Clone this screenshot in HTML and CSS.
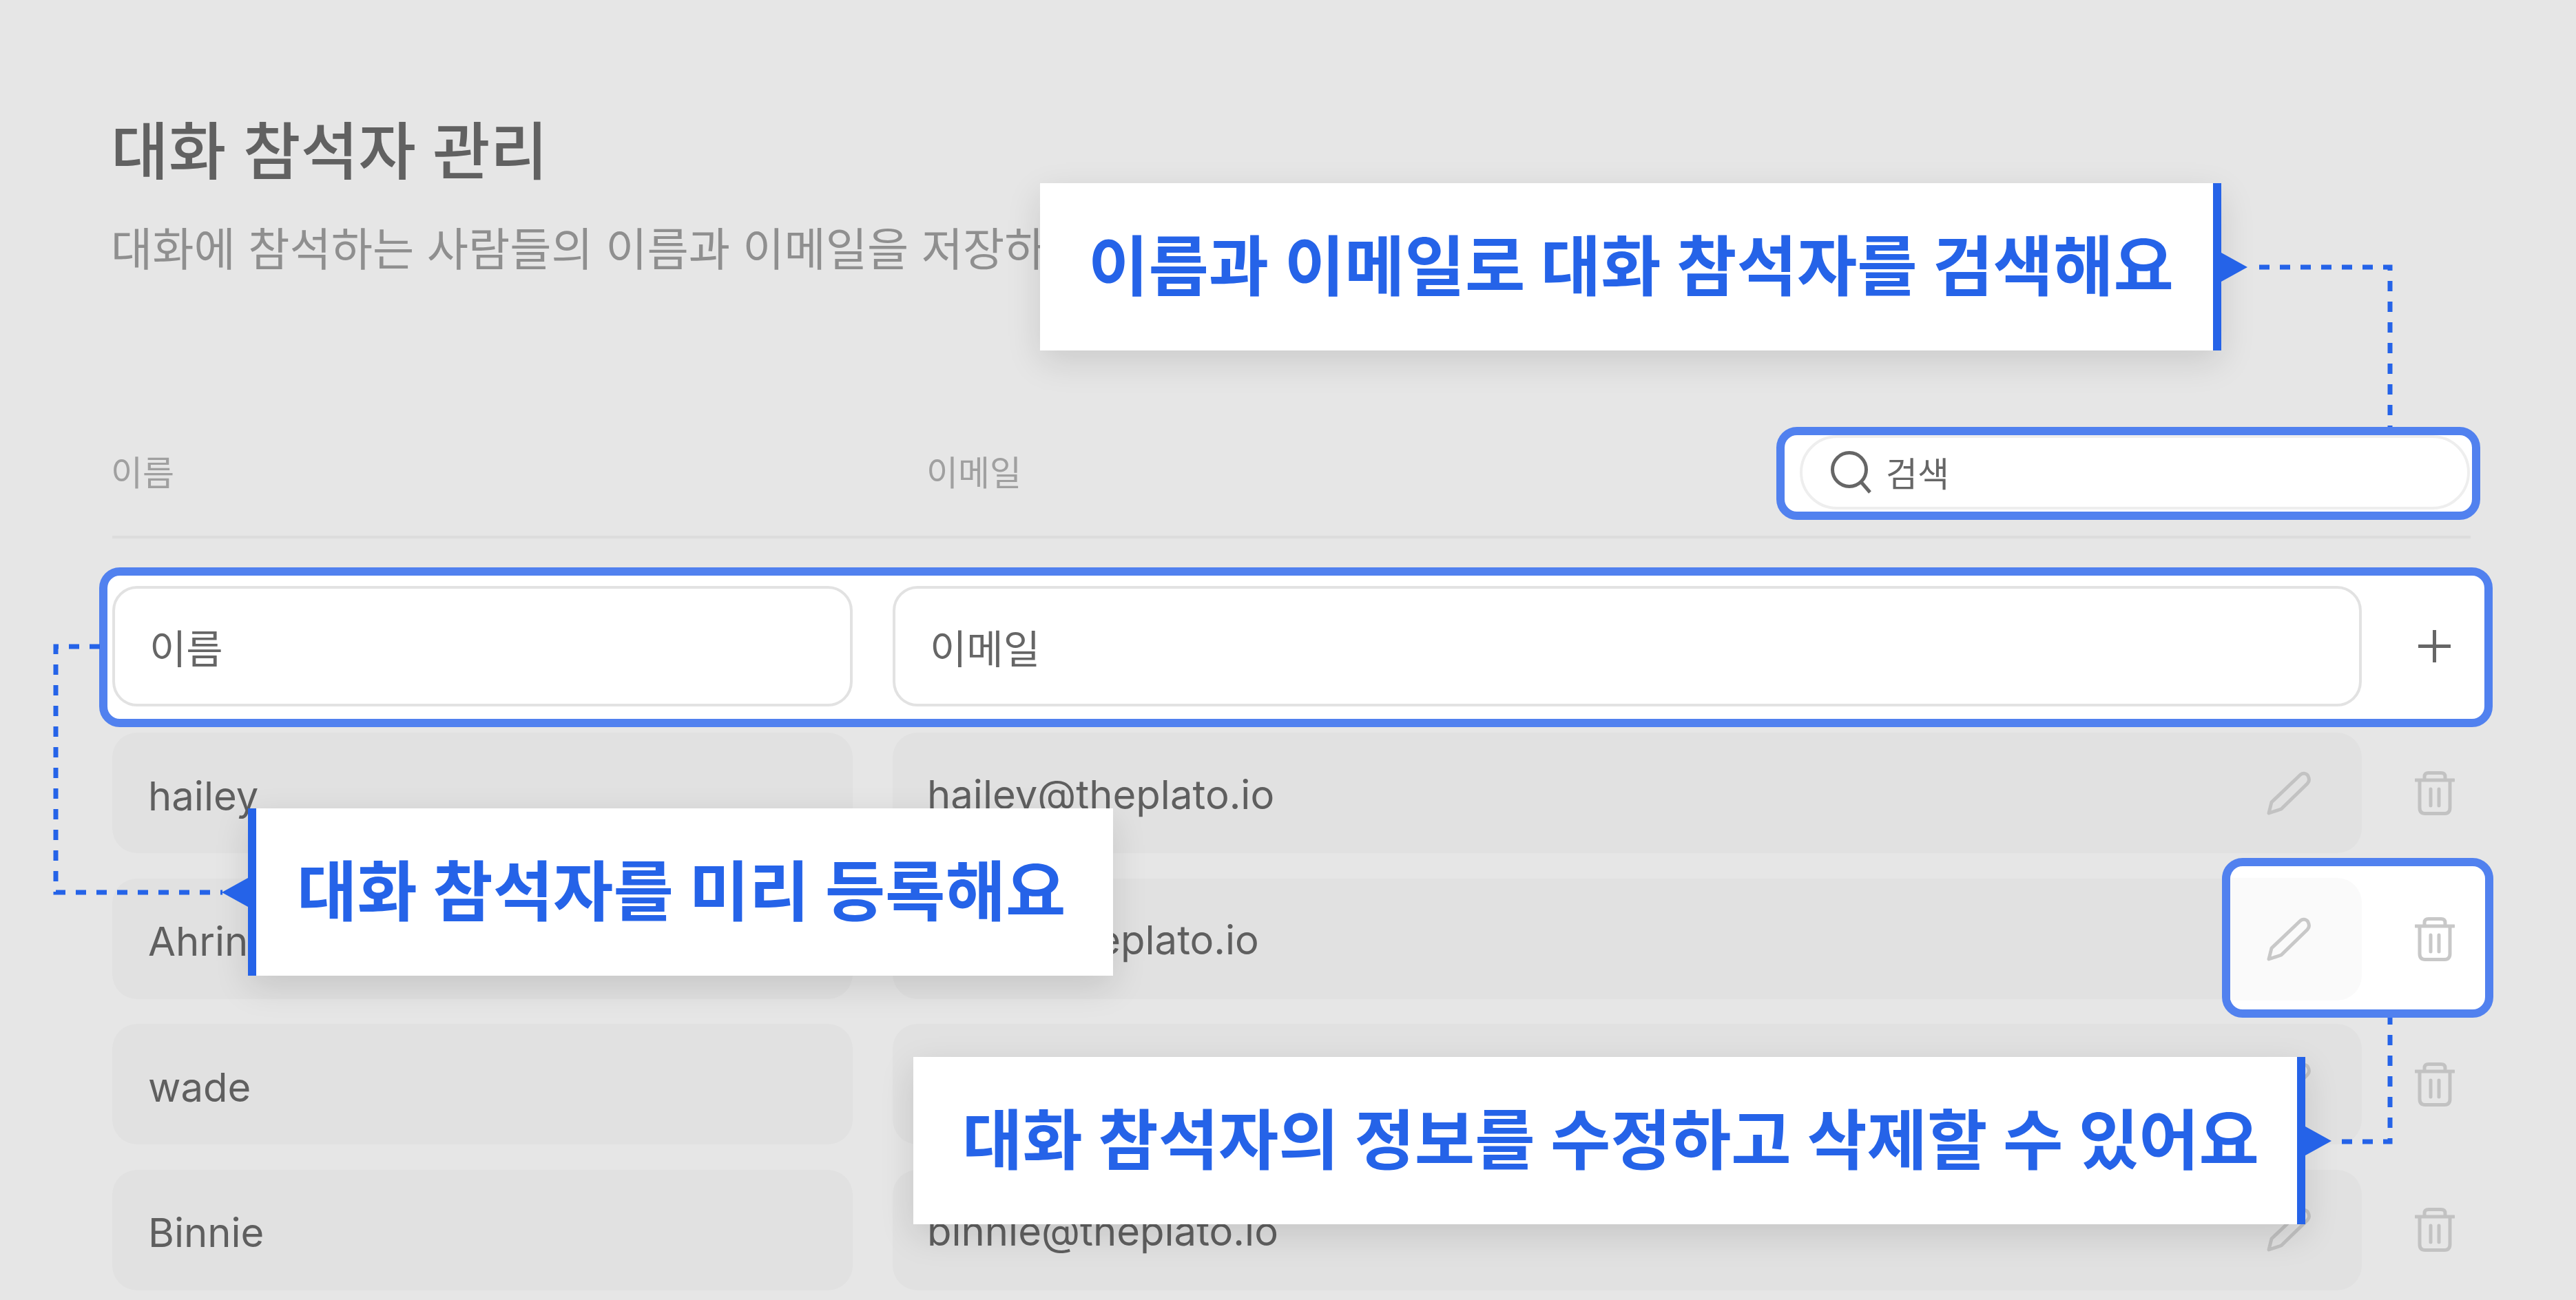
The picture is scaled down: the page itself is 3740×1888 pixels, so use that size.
FILE: index.html
```html
<!DOCTYPE html>
<html lang="ko">
<head>
<meta charset="utf-8">
<title>대화 참석자 관리</title>
<link rel="stylesheet" href="styles.css">
</head>
<body>
<svg width="0" height="0" class="defs">
  <symbol id="pencil" viewBox="0 0 64 64"><path d="M3 61 L7 45 L49 5 C53 2 58 3 60 7 C62 11 62 15 59 18 L21 55 Z"/></symbol>
  <symbol id="trash" viewBox="0 0 58 64"><path d="M1 13 H57 M14 13 V8 C14 4 16 2.500 20 2.500 H38 C42 2.500 44 4 44 8 V13 M7 13 V53 C7 59 10 61.500 15 61.500 H43 C48 61.500 51 59 51 53 V13 M23 26 V50 M35 26 V50"/></symbol>
</svg>
<div class="page">
  <main class="main">
    <h1 class="title">대화 참석자 관리</h1>
    <p class="desc">대화에 참석하는 사람들의 이름과 이메일을 저장하고 관리해요</p>
    <div class="head">
      <span class="head-name">이름</span>
      <span class="head-email">이메일</span>
      <div class="search-focus">
        <div class="search">
          <svg class="search-icon" viewBox="0 0 60 62"><circle cx="27" cy="27" r="24.500"/><path d="M44 45 L57 60"/></svg>
          <span>검색</span>
        </div>
      </div>
    </div>
    <div class="add">
      <div class="field">이름</div>
      <div class="field">이메일</div>
      <svg class="plus" viewBox="0 0 47 47"><path d="M0 23.500 H47 M23.500 0 V47"/></svg>
    </div>
    <div class="rows">
      <div class="row">
        <div class="cell cell-name">hailey</div>
        <div class="cell cell-email">hailey@theplato.io<svg class="ico-pencil"><use href="#pencil"/></svg></div>
        <svg class="ico-trash"><use href="#trash"/></svg>
      </div>
      <div class="row">
        <div class="cell cell-name">Ahrin</div>
        <div class="cell cell-email">ahrin@theplato.io</div>
        <div class="actions-focus">
          <div class="actions-edit"><svg class="ico-pencil ico-light"><use href="#pencil"/></svg></div>
          <svg class="ico-trash ico-light"><use href="#trash"/></svg>
        </div>
      </div>
      <div class="row">
        <div class="cell cell-name">wade</div>
        <div class="cell cell-email">wade@theplato.io<svg class="ico-pencil"><use href="#pencil"/></svg></div>
        <svg class="ico-trash"><use href="#trash"/></svg>
      </div>
      <div class="row">
        <div class="cell cell-name">Binnie</div>
        <div class="cell cell-email">binnie@theplato.io<svg class="ico-pencil"><use href="#pencil"/></svg></div>
        <svg class="ico-trash"><use href="#trash"/></svg>
      </div>
    </div>
  </main>

  <svg class="links" viewBox="0 0 3740 1888">
    <path d="M3280 388 H3470 V620"/>
    <path d="M145 939 H81 V1296 H323"/>
    <path d="M3400 1658 H3470 V1478"/>
  </svg>

  <div class="callout callout-search">이름과 이메일로 대화 참석자를 검색해요</div>
  <div class="callout callout-add">대화 참석자를 미리 등록해요</div>
  <div class="callout callout-edit">대화 참석자의 정보를 수정하고 삭제할 수 있어요</div>
</div>
</body>
</html>
```

FILE: styles.css
```css
* { box-sizing: border-box; }
html, body { margin: 0; padding: 0; }
body {
  width: 3740px;
  height: 1888px;
  overflow: hidden;
  background: #e6e6e6;
  font-family: Inter, "Noto Sans CJK KR", sans-serif;
}
.defs { position: absolute; }
.page { position: relative; width: 3740px; height: 1888px; overflow: hidden; }
.main { padding: 176px 153px 0 163px; }

.title {
  margin: 0 0 0 -2px;
  font-size: 91px;
  line-height: 88px;
  font-weight: 500;
  color: #616161;
  white-space: nowrap;
}
.desc {
  margin: 68px 0 0 -2px;
  font-size: 65.500px;
  line-height: 62px;
  font-weight: 400;
  color: #8f8f8f;
  white-space: nowrap;
}

.head {
  display: flex;
  align-items: center;
  margin-top: 226px;
  padding-bottom: 23px;
  border-bottom: 4px solid #dcdcdc;
  font-size: 50px;
  color: #a0a0a0;
}
.head-name { width: 1184px; margin: -10px 0 0 -2px; }
.head-email { flex: 1; margin-top: -10px; }
.search-focus {
  width: 1022px;
  height: 135px;
  margin-right: -14px;
  padding: 0 3px 3px 22px;
  background: #fff;
  border: 12px solid #5181ef;
  border-radius: 30px;
}
.search {
  display: flex;
  align-items: center;
  gap: 20px;
  height: 108px;
  padding: 0 0 0 41px;
  border: 4px solid #eeeeee;
  border-radius: 54px;
  font-size: 50px;
  color: #666;
}
.search span { margin-top: -3px; }
.search-icon { width: 60px; height: 62px; fill: none; stroke: #666; stroke-width: 5; }

.add {
  display: grid;
  grid-template-columns: 1075px 2133px 1fr;
  column-gap: 58px;
  align-items: center;
  width: 3475px;
  height: 232px;
  margin: 42px 0 0 -19px;
  padding: 15px 6px 18px 7px;
  background: #fff;
  border: 12px solid #5181ef;
  border-radius: 30px;
}
.field {
  display: flex;
  align-items: center;
  height: 175px;
  padding-left: 50px;
  border: 4px solid #e2e2e2;
  border-radius: 36px;
  font-size: 58px;
  color: #666;
}
.plus { width: 47px; height: 47px; justify-self: center; margin-left: -20px; fill: none; stroke: #666; stroke-width: 5; }

.rows { display: flex; flex-direction: column; gap: 36.500px; margin-top: 8px; }
.row {
  position: relative;
  display: grid;
  grid-template-columns: 1075px 2133px 96px;
  column-gap: 58px;
  align-items: center;
  height: 175px;
}
.cell {
  display: flex;
  align-items: center;
  justify-content: space-between;
  height: 175px;
  background: #e1e1e1;
  border-radius: 36px;
  font-size: 58px;
  color: #5f5f5f;
}
.cell-name { padding: 8px 0 0 52px; }
.cell-email { padding: 4px 74px 0 50px; }
.cell-email .ico-pencil { margin-top: -4px; }

.ico-pencil, .ico-trash { fill: none; stroke: #c2c2c2; stroke-width: 5; stroke-linejoin: round; stroke-linecap: round; }
.ico-pencil { width: 64px; height: 64px; }
.ico-trash { width: 58px; height: 64px; justify-self: center; }
.ico-light { stroke: #c8c8c8; }

.actions-focus {
  position: absolute;
  left: 3063px;
  top: -30px;
  display: flex;
  align-items: center;
  width: 394px;
  height: 232px;
  padding-top: 4px;
  background: #fff;
  border: 12px solid #5181ef;
  border-radius: 30px;
  overflow: hidden;
}
.actions-edit {
  display: flex;
  align-items: center;
  justify-content: center;
  width: 191px;
  height: 178px;
  padding-right: 22px;
  background: #fafafa;
  border-radius: 0 36px 36px 0;
}
.actions-focus .ico-trash { margin-left: 77px; }

.links {
  position: absolute;
  left: 0;
  top: 0;
  width: 3740px;
  height: 1888px;
  fill: none;
  stroke: #2563e8;
  stroke-width: 7;
  stroke-dasharray: 15 15;
}

.callout {
  position: absolute;
  display: flex;
  align-items: center;
  height: 243px;
  padding-bottom: 14px;
  background: #fff;
  color: #2563e8;
  font-size: 95px;
  font-weight: 700;
  white-space: nowrap;
  box-shadow: 0 16px 48px rgba(0, 0, 0, 0.12);
}
.callout::after {
  content: "";
  position: absolute;
  top: 50%;
  margin-top: -21px;
  border-style: solid;
  border-color: transparent;
  border-width: 21px 0;
}
.callout-search, .callout-edit { border-right: 12px solid #2563e8; }
.callout-search::after, .callout-edit::after {
  left: calc(100% + 12px);
  border-left: 38px solid #2563e8;
}
.callout-search { left: 1510px; top: 266px; width: 1715px; padding-left: 70px; }
.callout-add {
  left: 360px;
  top: 1174px;
  width: 1256px;
  padding-left: 59px;
  border-left: 12px solid #2563e8;
}
.callout-add::after {
  right: 100%;
  margin-right: 12px;
  border-right: 38px solid #2563e8;
}
.callout-edit { left: 1326px; top: 1535px; width: 2021px; padding-left: 71px; }
```
